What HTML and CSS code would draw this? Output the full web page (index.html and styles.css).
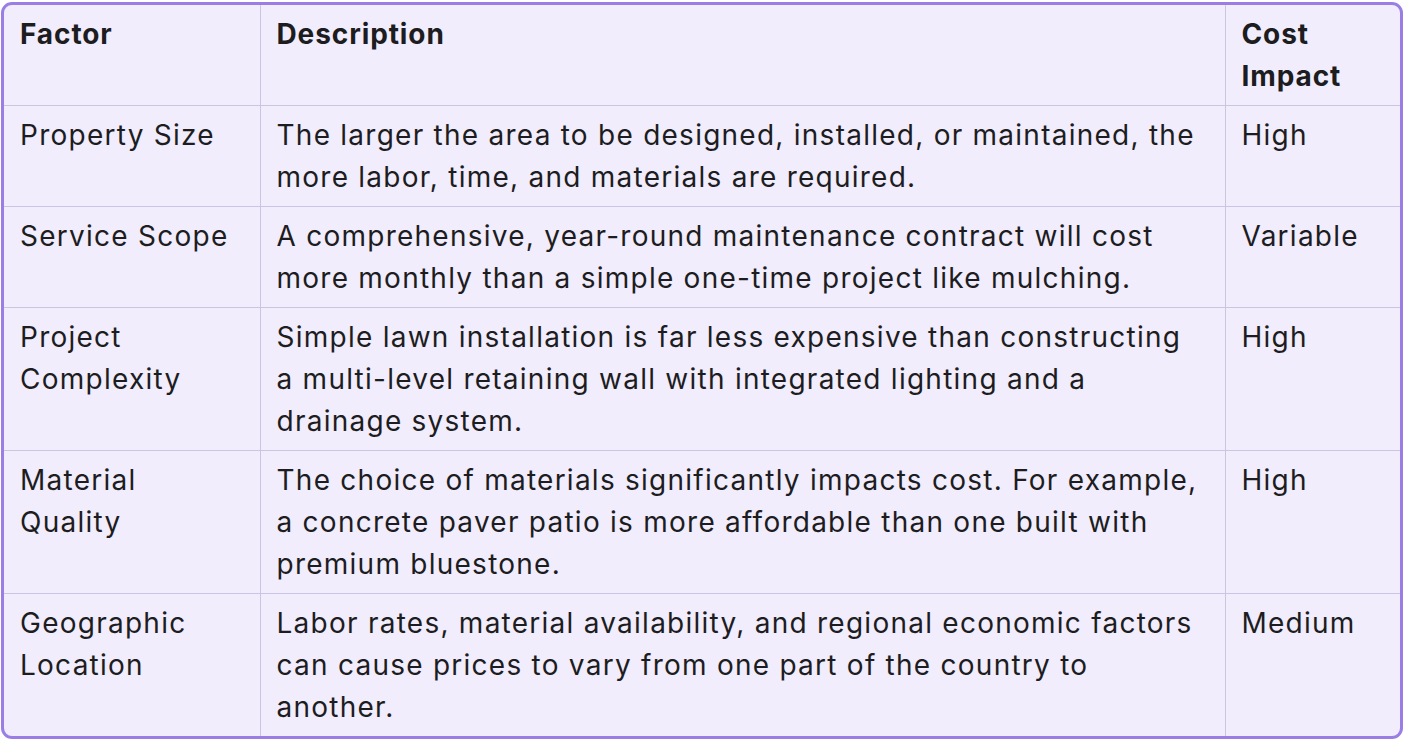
FILE: index.html
```html
<!DOCTYPE html>
<html lang="en">
<head>
<meta charset="utf-8">
<title>Landscaping Cost Factors</title>
<link rel="stylesheet" href="styles.css">
</head>
<body>
<div class="table-wrap">
  <table class="factors">
    <colgroup>
      <col class="col-factor">
      <col class="col-desc">
      <col class="col-impact">
    </colgroup>
    <thead>
      <tr>
        <th>Factor</th>
        <th class="desc">Description</th>
        <th>Cost Impact</th>
      </tr>
    </thead>
    <tbody>
      <tr>
        <td>Property Size</td>
        <td class="desc">The larger the area to be designed, installed, or maintained, the more labor, time, and materials are required.</td>
        <td>High</td>
      </tr>
      <tr>
        <td>Service Scope</td>
        <td class="desc">A comprehensive, year-round maintenance contract will cost more monthly than a simple one-time project like mulching.</td>
        <td>Variable</td>
      </tr>
      <tr>
        <td>Project Complexity</td>
        <td class="desc">Simple lawn installation is far less expensive than constructing a multi-level retaining wall with integrated lighting and a drainage system.</td>
        <td>High</td>
      </tr>
      <tr>
        <td>Material Quality</td>
        <td class="desc">The choice of materials significantly impacts cost. For example, a concrete paver patio is more affordable than one built with premium bluestone.</td>
        <td>High</td>
      </tr>
      <tr>
        <td>Geographic Location</td>
        <td class="desc">Labor rates, material availability, and regional economic factors can cause prices to vary from one part of the country to another.</td>
        <td>Medium</td>
      </tr>
    </tbody>
  </table>
</div>
</body>
</html>
```

FILE: styles.css
```css
html, body {
  margin: 0;
  padding: 0;
  background: #ffffff;
}

body {
  font-family: Inter, "Noto Sans", sans-serif;
  color: #1d1d1f;
}

.table-wrap {
  margin: 2px 3px 0 1px;
  border: 3px solid #9a7ee6;
  border-radius: 11px;
  overflow: hidden;
  background: #f1edfd;
}

.factors {
  width: 100%;
  border-collapse: collapse;
  table-layout: fixed;
  font-size: 28px;
  line-height: 42px;
}

.col-factor { width: 256px; }
.col-impact { width: 175px; }

.factors th,
.factors td {
  padding: 8px 16px;
  text-align: left;
  vertical-align: top;
  border: 1px solid #ccc4e2;
  letter-spacing: 1.25px;
}

.factors .desc {
  padding-right: 24px;
}

.factors th {
  font-weight: 700;
  letter-spacing: 0.9px;
}

.factors tr > :first-child { border-left: none; }
.factors tr > :last-child { border-right: none; }
.factors thead tr:first-child > * { border-top: none; }
.factors tbody tr:last-child > * { border-bottom: none; }
```
